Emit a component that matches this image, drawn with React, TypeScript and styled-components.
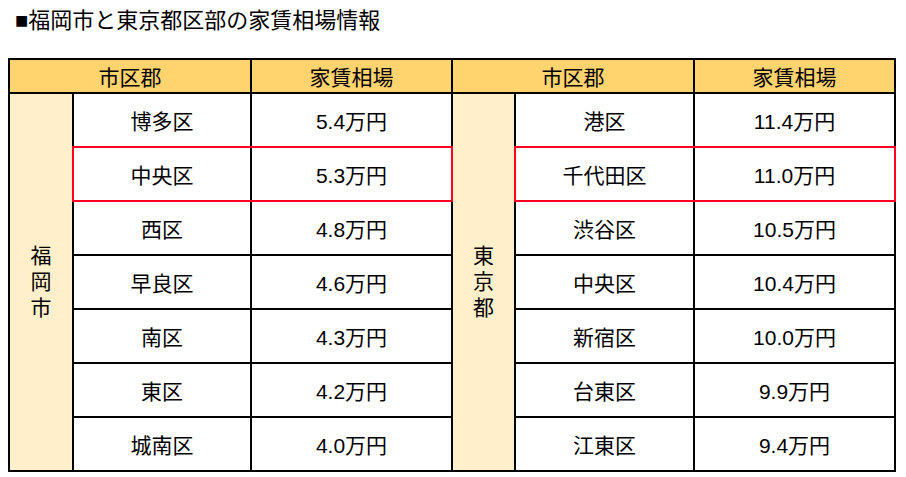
import React from "react";
import styled, { createGlobalStyle } from "styled-components";

const GlobalStyle = createGlobalStyle`
  body {
    margin: 8px;
    background: #ffffff;
    color: #000000;
    font-family: "Liberation Sans", "Noto Sans CJK JP", sans-serif;
  }
`;

const Title = styled.h2`
  margin: 0 0 24px 7px;
  font-size: 22px;
  line-height: 26px;
  font-weight: normal;
`;

const Table = styled.div`
  display: grid;
  grid-template-columns: 62px 176px 199px 61px 177px 199px;
  grid-template-rows: 32px repeat(7, 52px);
  gap: 2px;
  padding: 2px;
  width: max-content;
  background: #000000;
  font-size: 21px;
`;

const HeadCell = styled.div<{ $span?: number }>`
  grid-column: span ${(p) => p.$span ?? 1};
  display: flex;
  align-items: center;
  justify-content: center;
  background: #ffd36e;
`;

const Side = styled.div`
  grid-row: span 7;
  display: flex;
  align-items: center;
  justify-content: center;
  background: #fff0cb;
`;

const Vertical = styled.span`
  width: 1em;
  line-height: 26px;
  text-align: center;
  word-break: break-all;
`;

const Pair = styled.div<{ $mark?: boolean }>`
  grid-column: span 2;
  display: grid;
  grid-template-columns: subgrid;
  background: #000000;
  position: relative;
  z-index: ${(p) => (p.$mark ? 1 : 0)};

  &::after {
    content: "";
    display: ${(p) => (p.$mark ? "block" : "none")};
    position: absolute;
    inset: -2px;
    border: 2px solid #ff0022;
    pointer-events: none;
  }
`;

const Cell = styled.div`
  display: flex;
  align-items: center;
  justify-content: center;
  background: #ffffff;
`;

type Row = { name: string; rent: string; mark?: boolean };

const fukuoka: Row[] = [
  { name: "博多区", rent: "5.4万円" },
  { name: "中央区", rent: "5.3万円", mark: true },
  { name: "西区", rent: "4.8万円" },
  { name: "早良区", rent: "4.6万円" },
  { name: "南区", rent: "4.3万円" },
  { name: "東区", rent: "4.2万円" },
  { name: "城南区", rent: "4.0万円" },
];

const tokyo: Row[] = [
  { name: "港区", rent: "11.4万円" },
  { name: "千代田区", rent: "11.0万円", mark: true },
  { name: "渋谷区", rent: "10.5万円" },
  { name: "中央区", rent: "10.4万円" },
  { name: "新宿区", rent: "10.0万円" },
  { name: "台東区", rent: "9.9万円" },
  { name: "江東区", rent: "9.4万円" },
];

const RowPair = ({ row }: { row: Row }) => (
  <Pair $mark={row.mark}>
    <Cell>{row.name}</Cell>
    <Cell>{row.rent}</Cell>
  </Pair>
);

export default function App() {
  return (
    <>
      <GlobalStyle />
      <Title>■福岡市と東京都区部の家賃相場情報</Title>
      <Table>
        <HeadCell $span={2}>市区郡</HeadCell>
        <HeadCell>家賃相場</HeadCell>
        <HeadCell $span={2}>市区郡</HeadCell>
        <HeadCell>家賃相場</HeadCell>

        <Side>
          <Vertical>福岡市</Vertical>
        </Side>
        <RowPair row={fukuoka[0]} />
        <Side>
          <Vertical>東京都</Vertical>
        </Side>
        <RowPair row={tokyo[0]} />
        {fukuoka.slice(1).map((row, i) => (
          <React.Fragment key={row.name}>
            <RowPair row={row} />
            <RowPair row={tokyo[i + 1]} />
          </React.Fragment>
        ))}
      </Table>
    </>
  );
}
